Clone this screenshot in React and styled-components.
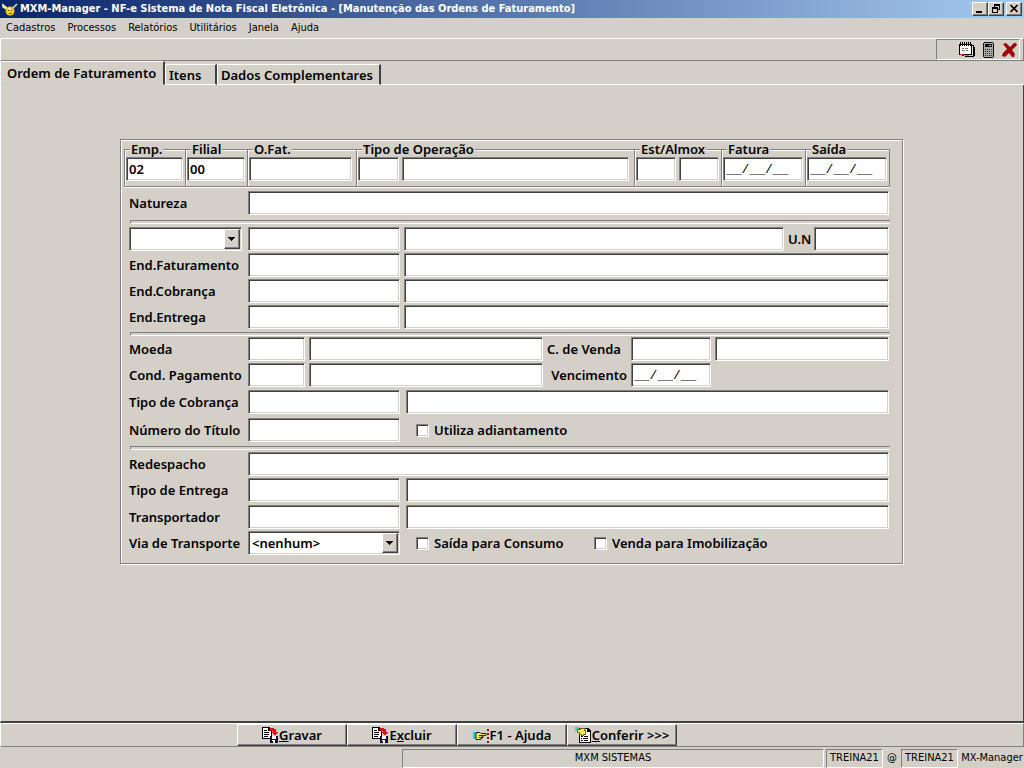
import React from "react";
import styled, { createGlobalStyle, css } from "styled-components";

const GlobalStyle = createGlobalStyle`
  * {
    box-sizing: border-box;
  }
  body {
    margin: 0;
    background: #d4d0c8;
    color: #000;
    font-family: "DejaVu Sans Condensed", "DejaVu Sans", sans-serif;
  }
`;

const boldText = css`
  font-family: "Noto Sans", "DejaVu Sans", sans-serif;
  font-size: 13px;
  font-weight: 600;
  line-height: 16px;
`;

const smallText = css`
  font-family: "DejaVu Sans Condensed", "DejaVu Sans", sans-serif;
  font-size: 11px;
  line-height: 14px;
`;

const raised = css`
  border: 1px solid;
  border-color: #fff #404040 #404040 #fff;
  box-shadow: inset -1px -1px 0 #808080;
  background: #d4d0c8;
`;

const sunken = css`
  border: 1px solid;
  border-color: #808080 #fff #fff #808080;
  box-shadow: inset 1px 1px 0 #404040, inset -1px -1px 0 #d4d0c8;
  background: #fff;
`;

const Window = styled.div`
  display: flex;
  flex-direction: column;
  min-height: 100vh;
`;

const TitleBar = styled.header`
  display: flex;
  align-items: center;
  gap: 2px;
  height: 18px;
  padding: 0 2px;
  background: linear-gradient(to right, #0a246a, #a6caf0);
`;

const Title = styled.h1`
  flex: 1;
  margin: 0;
  color: #fff;
  font-size: 11px;
  font-weight: 700;
  line-height: 16px;
  white-space: nowrap;
`;

const WindowButtons = styled.div`
  display: flex;
`;

const WindowButton = styled.button`
  ${raised}
  display: flex;
  width: 16px;
  height: 14px;
  padding: 0;
  margin-left: ${props => (props.$apart ? "2px" : "0")};
`;

const MenuBar = styled.nav`
  display: flex;
  gap: 12px;
  height: 20px;
  padding: 3px 6px;
`;

const MenuLink = styled.a`
  ${smallText}
  color: #000;
  text-decoration: none;
`;

const ToolBar = styled.div`
  display: flex;
  justify-content: flex-end;
  height: 23px;
  padding-right: 3px;
  border: 1px solid;
  border-color: #fff #808080 #808080 #fff;
`;

const ToolTray = styled.div`
  display: flex;
  align-items: center;
  justify-content: flex-end;
  gap: 4px;
  width: 84px;
  padding-right: 2px;
  border: 1px solid;
  border-color: #808080 #fff #fff #808080;
`;

const ToolButton = styled.button`
  display: flex;
  padding: 0;
  border: 0;
  background: none;
`;

const Tabs = styled.div`
  display: flex;
  align-items: flex-end;
  height: 24px;
`;

const Tab = styled.button`
  ${boldText}
  height: ${props => (props.$active ? "24px" : "21px")};
  padding: ${props => (props.$active ? "0 6px 0 6px" : "0 5px 0 3px")};
  border: solid;
  border-width: 1px 2px 1px 1px;
  border-color: #fff #404040 ${props => (props.$active ? "#d4d0c8" : "#fff")} #fff;
  background: #d4d0c8;
  min-width: ${props => props.$width}px;
  text-align: left;
  white-space: nowrap;
`;

const TabLine = styled.div`
  flex: 1;
  border-bottom: 1px solid #fff;
`;

const Page = styled.main`
  flex: 1;
  padding: 54px 120px 24px 119px;
  border: solid;
  border-width: 0 1px 2px 1px;
  border-color: #fff #404040 #404040 #fff;
`;

const Panel = styled.form`
  border: 1px solid #808080;
  box-shadow: 1px 1px 0 #fff, inset 1px 1px 0 #fff;
  padding: 1px 0 8px;
`;

const Groups = styled.div`
  display: flex;
  padding: 0 12px 0 3px;
`;

const Group = styled.fieldset`
  display: flex;
  flex: ${props => (props.$width ? "none" : "1")};
  gap: 3px;
  width: ${props => (props.$width ? `${props.$width}px` : "auto")};
  min-width: 0;
  height: 46px;
  margin: 0;
  padding: 0 ${props => props.$right || 2}px 0 1px;
  border: 1px solid #808080;
  border-right-width: ${props => (props.$last ? "1px" : "0")};
  box-shadow: 0 1px 0 #fff, inset 1px 1px 0 #fff;
`;

const Legend = styled.legend`
  ${boldText}
  margin-left: 4px;
  padding: 0 1px;
  background: #d4d0c8;
  white-space: nowrap;
`;

const Section = styled.div`
  display: flex;
  flex-direction: column;
  gap: 2px;
  padding: ${props => props.$top || 0}px 13px 0 8px;
`;

const Row = styled.div`
  display: flex;
  align-items: center;
  gap: ${props => props.$gap || 4}px;
  height: 24px;
  margin-top: ${props => props.$space || 0}px;
`;

const Label = styled.label`
  ${boldText}
  flex: none;
  width: ${props => props.$width}px;
  margin-right: -${props => props.$pull || 0}px;
  text-align: ${props => (props.$right ? "right" : "left")};
  white-space: nowrap;
`;

const Input = styled.input`
  ${boldText}
  ${sunken}
  flex: ${props => (props.$width ? "none" : "1")};
  width: ${props => (props.$width ? `${props.$width}px` : "auto")};
  min-width: 0;
  height: 24px;
  padding: 0 2px;
  border-radius: 0;
  outline: none;
`;

const DateInput = styled(Input)`
  font-family: "Liberation Mono", monospace;
  font-size: 13px;
  font-weight: 400;
`;

const Blank = styled.div`
  width: ${props => props.$width}px;
`;

const Rule = styled.hr`
  height: 4px;
  margin: ${props => props.$top || 3}px 12px 0 9px;
  border: 1px solid;
  border-color: #808080 #fff #fff #808080;
  border-right: 0;
`;

const SelectBox = styled.div`
  ${sunken}
  display: grid;
  flex: none;
  width: ${props => props.$width}px;
  height: 24px;
  margin-right: ${props => props.$space || 0}px;
  padding: 1px;
`;

const NativeSelect = styled.select`
  ${boldText}
  grid-area: 1 / 1;
  width: 100%;
  padding: 0 18px 0 2px;
  border: 0;
  outline: none;
  appearance: none;
  background: #fff;
`;

const Arrow = styled.span`
  ${raised}
  display: flex;
  align-items: center;
  justify-content: center;
  grid-area: 1 / 1;
  justify-self: end;
  width: 16px;
  pointer-events: none;
`;

const CheckLabel = styled.label`
  ${boldText}
  display: flex;
  align-items: center;
  gap: 5px;
  width: ${props => (props.$width ? `${props.$width}px` : "auto")};
  margin-left: ${props => (props.$first ? "12px" : "0")};
  white-space: nowrap;
`;

const CheckBox = styled.input`
  ${sunken}
  width: 13px;
  height: 13px;
  margin: 0;
  appearance: none;
  &:checked {
    background: #404040;
  }
`;

const ActionBar = styled.div`
  display: flex;
  height: 24px;
  padding-left: 236px;
  border: 1px solid;
  border-color: #fff #808080 #808080 #fff;
`;

const ActionButton = styled.button`
  ${raised}
  ${boldText}
  display: flex;
  align-items: center;
  justify-content: center;
  width: 110px;
  padding: 0;
  white-space: nowrap;
`;

const StatusBar = styled.footer`
  ${smallText}
  display: flex;
  gap: 2px;
  height: 21px;
  padding: 2px 0 0 402px;
`;

const StatusCell = styled.div`
  flex: ${props => (props.$width ? "none" : "1")};
  width: ${props => (props.$width ? `${props.$width}px` : "auto")};
  padding-top: 1px;
  border: 1px solid;
  border-color: ${props =>
    props.$flat ? "transparent" : "#808080 #fff #fff #808080"};
  text-align: center;
  white-space: nowrap;
`;

const AppIcon = () => (
  <svg width="16" height="16" viewBox="0 0 16 16">
    <path d="M0 3l5 4M15 3l-4 4M1 3v3l4 2" stroke="#f4e9a0" strokeWidth="1.5" fill="none" />
    <circle cx="8" cy="10" r="4.5" fill="#f2c91d" />
    <path d="M6 9h1v1H6zM9 9h1v1H9zM7 12h3v1H7z" fill="#7a5200" />
    <path d="M6 7h3v1H6z" fill="#fff6b0" />
  </svg>
);

const MinimizeIcon = () => (
  <svg width="14" height="12" viewBox="0 0 14 12">
    <path d="M3 8h6v2H3z" />
  </svg>
);

const RestoreIcon = () => (
  <svg width="14" height="12" viewBox="0 0 14 12" shapeRendering="crispEdges">
    <path d="M5 1h6v6H9V6h1V3H6v1H5zM3 4h6v6H3zm1 2v3h4V6z" fillRule="evenodd" />
  </svg>
);

const CloseIcon = () => (
  <svg width="14" height="12" viewBox="0 0 14 12">
    <path d="M3.5 2l7 7M10.500 2l-7 7" stroke="#000" strokeWidth="1.7" />
  </svg>
);

const NotesIcon = () => (
  <svg width="17" height="16" viewBox="0 0 17 16" shapeRendering="crispEdges">
    <path d="M0 2h13v1h2v2h1v9h-1v1H6v-1H3v-1H0z" fill="#000" />
    <path d="M1 3h11v9H1z" fill="#fff" />
    <path d="M13 4h1v9h-1zM5 13h8v1H5z" fill="#e4e4e4" />
    <path d="M1 0h1v4H1zM3 0h1v4H3zM5 0h1v4H5zM7 0h1v4H7zM9 0h1v4H9zM11 0h1v4h-1z" fill="#000" />
    <path d="M3 6h2v1H3zM6 6h3v1H6zM3 8h3v1H3zM7 8h2v1H7z" fill="#777" />
    <path d="M1 12h4v1H1z" fill="#d22" />
    <path d="M6 13h4v1H6z" fill="#2aa" />
    <path d="M11 13h3v1h-3z" fill="#dc3" />
  </svg>
);

const CalculatorIcon = () => (
  <svg width="17" height="16" viewBox="0 0 17 16" shapeRendering="crispEdges">
    <path d="M4 0h9v1h1v14h-1v1H4v-1H3V1h1z" fill="#111" />
    <path d="M4 1h9v14H4z" fill="#aaa" />
    <path d="M5 2h7v3H5z" fill="#111" />
    <path d="M9 3h2v1H9z" fill="#6cc" />
    <path d="M5 7h1v1H5zM7 7h1v1H7zM9 7h1v1H9zM5 9h1v1H5zM7 9h1v1H7zM9 9h1v1H9zM5 11h1v1H5zM7 11h1v1H7zM9 11h1v1H9zM5 13h1v1H5zM7 13h1v1H7z" fill="#222" />
    <path d="M11 7h1v1h-1zM11 9h1v1h-1zM11 11h1v1h-1zM9 13h3v1H9z" fill="#a22" />
  </svg>
);

const ExitIcon = () => (
  <svg width="16" height="16" viewBox="0 0 16 16">
    <path d="M2 2l3-1 4 4 4-4h2l1 2-5 5 3 4-1 3h-2l-3-4-4 4-3-1 1-3 4-4z" fill="#a00404" />
  </svg>
);

const ArrowIcon = () => (
  <svg width="8" height="4" viewBox="0 0 8 4" shapeRendering="crispEdges">
    <path d="M0 0h7v1H0zM1 1h5v1H1zM2 2h3v1H2zM3 3h1v1H3z" />
  </svg>
);

const SaveIcon = () => (
  <svg width="17" height="16" viewBox="0 0 17 16" shapeRendering="crispEdges">
    <path d="M0 0h7l3 3v9H0z" fill="#000" />
    <path d="M1 1h5v3h3v7H1z" fill="#fff" />
    <path d="M2 3h3v1H2zM2 5h5v1H2zM2 7h5v1H2zM2 9h4v1H2z" fill="#000" />
    <path d="M8 1h4v1h2v3h2l-3 4-4-4h2V4H8z" fill="#e01010" />
    <path d="M8 9h8v7H8z" fill="#101030" />
    <path d="M10 9h4v3h-4zM10 13h3v3h-3z" fill="#fff" />
    <path d="M10 14h1v2h-1z" fill="#101030" />
  </svg>
);

const HandIcon = () => (
  <svg width="17" height="16" viewBox="0 0 17 16">
    <path d="M0 5h3v7H0z" fill="#20c8d8" />
    <path d="M3 5.500h4l1 1h5v2H9v1h1v1H9v1H8v1H3z" fill="#f6ee42" stroke="#222" strokeWidth="1" />
    <path d="M6 8.500h3M6 10.500h3" stroke="#222" />
    <path d="M14 2h2v2h-2zM14 6h2v2h-2zM14 10h2v2h-2zM14 14h2v2h-2z" fill="#702020" />
  </svg>
);

const CheckListIcon = () => (
  <svg width="17" height="16" viewBox="0 0 17 16" shapeRendering="crispEdges">
    <path d="M4 1h9l3 3v12H4z" fill="#000" />
    <path d="M5 2h7v3h3v10H5z" fill="#fff" />
    <path d="M6 9h2v1H6zM9 9h4v1H9zM6 11h1v1H6zM8 11h5v1H8zM6 13h2v1H6zM9 13h4v1H9z" fill="#000" />
    <path d="M0 0h4v4H0z" fill="#30d8c8" />
    <path d="M2 2h3V1h5v2h1v5H9v1H6V8H4V6H2z" fill="#777020" />
    <path d="M3 3h3V2h3v2h1v3H8v1H7V7H5V5H3z" fill="#f2ec58" />
  </svg>
);

const Select = ({ id, width, space, label, value }) => (
  <SelectBox $width={width} $space={space}>
    <NativeSelect id={id} aria-label={label}>
      <option>{value}</option>
    </NativeSelect>
    <Arrow>
      <ArrowIcon />
    </Arrow>
  </SelectBox>
);

// Label followed by a code box and, when there is one, its description box
const Field = ({ id, label, code, gap, space }) => (
  <Row $gap={gap} $space={space}>
    <Label htmlFor={id} $width={119} $pull={gap || 4}>
      {label}
    </Label>
    <Input id={id} $width={code} />
    {code ? <Input aria-label={`${label} - descrição`} /> : null}
  </Row>
);

const menus = ["Cadastros", "Processos", "Relatórios", "Utilitários", "Janela", "Ajuda"];

const App = () => {
  return (
    <Window>
      <GlobalStyle />
      <TitleBar>
        <AppIcon />
        <Title>
          MXM-Manager - NF-e Sistema de Nota Fiscal Eletrônica - [Manutenção das
          Ordens de Faturamento]
        </Title>
        <WindowButtons>
          <WindowButton aria-label="Minimizar">
            <MinimizeIcon />
          </WindowButton>
          <WindowButton aria-label="Restaurar">
            <RestoreIcon />
          </WindowButton>
          <WindowButton aria-label="Fechar" $apart>
            <CloseIcon />
          </WindowButton>
        </WindowButtons>
      </TitleBar>
      <MenuBar>
        {menus.map(menu => (
          <MenuLink href="#" key={menu}>
            {menu}
          </MenuLink>
        ))}
      </MenuBar>
      <ToolBar>
        <ToolTray>
          <ToolButton aria-label="Agenda">
            <NotesIcon />
          </ToolButton>
          <ToolButton aria-label="Calculadora">
            <CalculatorIcon />
          </ToolButton>
          <ToolButton aria-label="Sair">
            <ExitIcon />
          </ToolButton>
        </ToolTray>
      </ToolBar>
      <Tabs>
        <Tab $active $width={165}>Ordem de Faturamento</Tab>
        <Tab $width={52}>Itens</Tab>
        <Tab $width={164}>Dados Complementares</Tab>
        <TabLine />
      </Tabs>

      <Page>
        <Panel onSubmit={e => e.preventDefault()}>
          <Groups>
            <Group $width={61}>
              <Legend>Emp.</Legend>
              <Input aria-label="Emp." defaultValue="02" />
            </Group>
            <Group $width={62}>
              <Legend>Filial</Legend>
              <Input aria-label="Filial" defaultValue="00" />
            </Group>
            <Group $width={109} $right={4}>
              <Legend>O.Fat.</Legend>
              <Input aria-label="O.Fat." />
            </Group>
            <Group $right={5}>
              <Legend>Tipo de Operação</Legend>
              <Input aria-label="Código da operação" $width={41} />
              <Input aria-label="Tipo de Operação" />
            </Group>
            <Group $width={87}>
              <Legend>Est/Almox</Legend>
              <Input aria-label="Est" />
              <Input aria-label="Almox" />
            </Group>
            <Group $width={84}>
              <Legend>Fatura</Legend>
              <DateInput aria-label="Fatura" defaultValue="__/__/__" />
            </Group>
            <Group $width={85} $last>
              <Legend>Saída</Legend>
              <DateInput aria-label="Saída" defaultValue="__/__/__" />
            </Group>
          </Groups>

          <Section $top={4}>
            <Field id="natureza" label="Natureza" />
          </Section>
          <Rule $top={5} />

          <Section $top={3}>
            <Row>
              <Select width={113} space={2} label="Tipo de cliente" />
              <Input aria-label="Código" $width={152} />
              <Input aria-label="Nome" />
              <Label htmlFor="un" $width={22}>
                U.N
              </Label>
              <Input id="un" $width={75} />
            </Row>
            <Field id="faturamento" label="End.Faturamento" code={152} />
            <Field id="cobranca" label="End.Cobrança" code={152} />
            <Field id="entrega" label="End.Entrega" code={152} />
          </Section>
          <Rule />

          <Section $top={1}>
            <Row>
              <Label htmlFor="moeda" $width={119} $pull={4}>
                Moeda
              </Label>
              <Input id="moeda" $width={57} />
              <Input aria-label="Moeda - descrição" />
              <Label htmlFor="venda" $width={80}>
                C. de Venda
              </Label>
              <Input id="venda" $width={80} />
              <Input aria-label="Condição de venda" $width={174} />
            </Row>
            <Row>
              <Label htmlFor="pagamento" $width={119} $pull={4}>
                Cond. Pagamento
              </Label>
              <Input id="pagamento" $width={57} />
              <Input aria-label="Cond. Pagamento - descrição" />
              <Label htmlFor="vencimento" $width={80} $right>
                Vencimento
              </Label>
              <DateInput id="vencimento" $width={80} defaultValue="__/__/__" />
              <Blank $width={174} />
            </Row>
            <Field id="tipocobranca" label="Tipo de Cobrança" code={152} gap={6} space={1} />
            <Row $space={2}>
              <Label htmlFor="titulo" $width={119} $pull={4}>
                Número do Título
              </Label>
              <Input id="titulo" $width={152} />
              <CheckLabel $first>
                <CheckBox type="checkbox" />
                Utiliza adiantamento
              </CheckLabel>
            </Row>
          </Section>
          <Rule $top={4} />

          <Section $top={2}>
            <Field id="redespacho" label="Redespacho" />
            <Field id="tipoentrega" label="Tipo de Entrega" code={152} gap={6} />
            <Field id="transportador" label="Transportador" code={152} gap={6} space={1} />
            <Row>
              <Label htmlFor="via" $width={119} $pull={4}>
                Via de Transporte
              </Label>
              <Select id="via" width={152} value="<nenhum>" />
              <CheckLabel $first $width={174}>
                <CheckBox type="checkbox" />
                Saída para Consumo
              </CheckLabel>
              <CheckLabel>
                <CheckBox type="checkbox" />
                Venda para Imobilização
              </CheckLabel>
            </Row>
          </Section>
        </Panel>
      </Page>

      <ActionBar>
        <ActionButton>
          <SaveIcon />
          <span><u>G</u>ravar</span>
        </ActionButton>
        <ActionButton>
          <SaveIcon />
          <span>E<u>x</u>cluir</span>
        </ActionButton>
        <ActionButton>
          <HandIcon />
          <span>F1 - Ajuda</span>
        </ActionButton>
        <ActionButton>
          <CheckListIcon />
          <span><u>C</u>onferir &gt;&gt;&gt;</span>
        </ActionButton>
      </ActionBar>
      <StatusBar>
        <StatusCell>MXM SISTEMAS</StatusCell>
        <StatusCell $width={57}>TREINA21</StatusCell>
        <StatusCell $width={14} $flat>@</StatusCell>
        <StatusCell $width={57}>TREINA21</StatusCell>
        <StatusCell $width={64} $flat>MX-Manager</StatusCell>
      </StatusBar>
    </Window>
  );
};

export default App;
